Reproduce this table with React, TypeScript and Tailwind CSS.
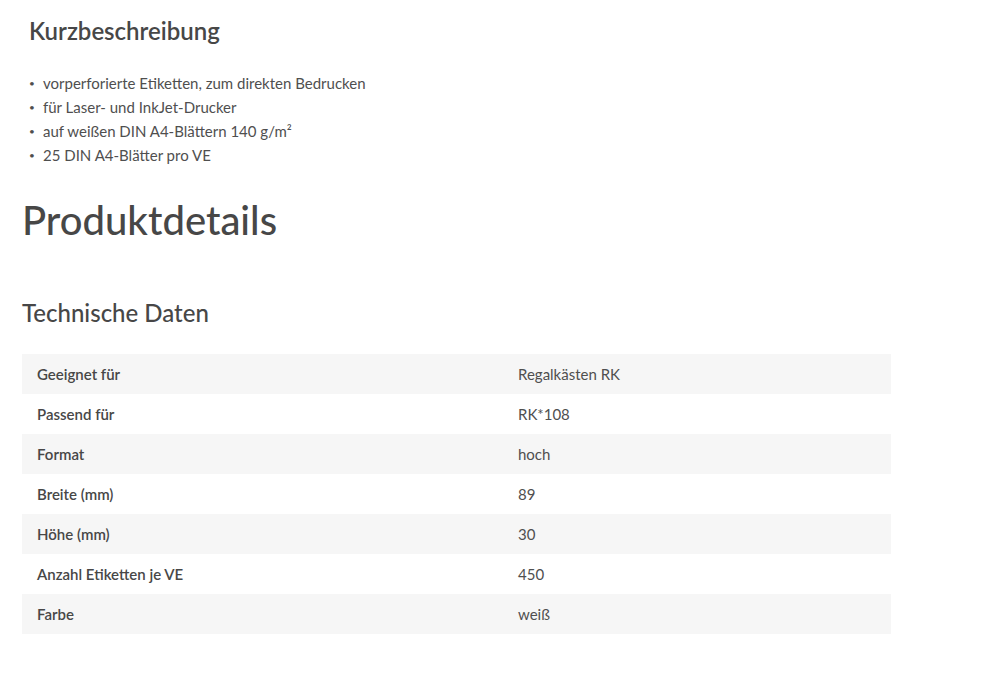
const bullets = [
  "vorperforierte Etiketten, zum direkten Bedrucken",
  "für Laser- und InkJet-Drucker",
  "auf weißen DIN A4-Blättern 140 g/m²",
  "25 DIN A4-Blätter pro VE",
];

const specs: [string, string][] = [
  ["Geeignet für", "Regalkästen RK"],
  ["Passend für", "RK*108"],
  ["Format", "hoch"],
  ["Breite (mm)", "89"],
  ["Höhe (mm)", "30"],
  ["Anzahl Etiketten je VE", "450"],
  ["Farbe", "weiß"],
];

export default function App() {
  return (
    <div className="min-h-[674px] bg-white font-['Lato',_'Open_Sans',_sans-serif] text-[#4a4a4a]">
      <div className="w-[869px] pl-[22px] pt-[15px]">
        <section className="pl-[7px]">
          <h2 className="text-[24px] font-semibold leading-[32px] text-[#474747]">
            Kurzbeschreibung
          </h2>
          <ul className="mt-[24px] text-[15px] leading-[24px] text-[#4f4f4f]">
            {bullets.map((b) => (
              <li key={b} className="flex items-center">
                <span className="w-[14px] text-[10px]">•</span>
                <span>{b}</span>
              </li>
            ))}
          </ul>
        </section>

        <h1 className="mt-[26px] text-[40px] font-medium leading-[54px] text-[#474747]">
          Produktdetails
        </h1>

        <h3 className="mt-[50px] text-[24px] font-medium leading-[32px] text-[#474747]">
          Technische Daten
        </h3>

        <table className="mt-[25px] w-[869px] table-fixed text-[15px]">
          <tbody>
            {specs.map(([label, value], i) => (
              <tr key={label} className={i % 2 === 0 ? "bg-[#f6f6f6]" : "bg-white"}>
                <td className="h-[40px] w-[481px] px-[15px] font-semibold text-[#474747]">
                  {label}
                </td>
                <td className="h-[40px] px-[15px] text-[#4f4f4f]">{value}</td>
              </tr>
            ))}
          </tbody>
        </table>
      </div>
    </div>
  );
}
